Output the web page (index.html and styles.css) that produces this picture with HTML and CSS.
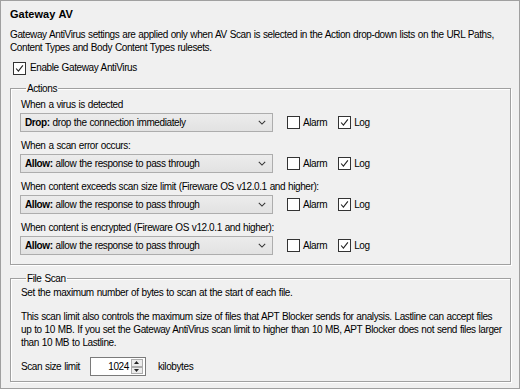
FILE: index.html
```html
<!DOCTYPE html>
<html lang="en">
<head>
  <meta charset="UTF-8"/>
  <title>Gateway AV</title>
  <link rel="stylesheet" href="styles.css">
</head>
<body>
  <div class="panel">
    <h2 class="panel-title">Gateway AV</h2>
    <p class="intro">Gateway AntiVirus settings are applied only when AV Scan is selected in the Action drop-down lists on the URL Paths, Content Types and Body Content Types rulesets.</p>

    <label class="check-row enable-row">
      <span class="box checked"><svg viewBox="0 0 13 13"><path d="M2.5 6.5l2.7 3L10.5 2.8"/></svg></span>
      Enable Gateway AntiVirus
    </label>

    <fieldset class="group actions">
      <legend>Actions</legend>

      <div class="action">
        <div class="action-label">When a virus is detected</div>
        <div class="action-row">
          <div class="select"><span><b>Drop:</b> drop the connection immediately</span><svg viewBox="0 0 10 6"><path d="M1 1l4 4 4-4"/></svg></div>
          <label class="check-row"><span class="box"></span>Alarm</label>
          <label class="check-row"><span class="box checked"><svg viewBox="0 0 13 13"><path d="M2.5 6.5l2.7 3L10.5 2.8"/></svg></span>Log</label>
        </div>
      </div>

      <div class="action">
        <div class="action-label">When a scan error occurs:</div>
        <div class="action-row">
          <div class="select"><span><b>Allow:</b> allow the response to pass through</span><svg viewBox="0 0 10 6"><path d="M1 1l4 4 4-4"/></svg></div>
          <label class="check-row"><span class="box"></span>Alarm</label>
          <label class="check-row"><span class="box checked"><svg viewBox="0 0 13 13"><path d="M2.5 6.5l2.7 3L10.5 2.8"/></svg></span>Log</label>
        </div>
      </div>

      <div class="action">
        <div class="action-label">When content exceeds scan size limit (Fireware OS v12.0.1 and higher):</div>
        <div class="action-row">
          <div class="select"><span><b>Allow:</b> allow the response to pass through</span><svg viewBox="0 0 10 6"><path d="M1 1l4 4 4-4"/></svg></div>
          <label class="check-row"><span class="box"></span>Alarm</label>
          <label class="check-row"><span class="box checked"><svg viewBox="0 0 13 13"><path d="M2.5 6.5l2.7 3L10.5 2.8"/></svg></span>Log</label>
        </div>
      </div>

      <div class="action">
        <div class="action-label">When content is encrypted (Fireware OS v12.0.1 and higher):</div>
        <div class="action-row">
          <div class="select"><span><b>Allow:</b> allow the response to pass through</span><svg viewBox="0 0 10 6"><path d="M1 1l4 4 4-4"/></svg></div>
          <label class="check-row"><span class="box"></span>Alarm</label>
          <label class="check-row"><span class="box checked"><svg viewBox="0 0 13 13"><path d="M2.5 6.5l2.7 3L10.5 2.8"/></svg></span>Log</label>
        </div>
      </div>
    </fieldset>

    <fieldset class="group file-scan">
      <legend>File Scan</legend>
      <p class="note first">Set the maximum number of bytes to scan at the start of each file.</p>
      <p class="note">This scan limit also controls the maximum size of files that APT Blocker sends for analysis. Lastline can accept files up to 10 MB. If you set the Gateway AntiVirus scan limit to higher than 10 MB, APT Blocker does not send files larger than 10 MB to Lastline.</p>
      <div class="limit-row">
        <span>Scan size limit</span>
        <div class="spin">
          <span class="spin-value">1024</span>
          <div class="spin-buttons">
            <span class="spin-btn"><svg viewBox="0 0 7 4"><path d="M0 4L3.5 0 7 4z"/></svg></span>
            <span class="spin-btn"><svg viewBox="0 0 7 4"><path d="M0 0h7L3.5 4z"/></svg></span>
          </div>
        </div>
        <span>kilobytes</span>
      </div>
    </fieldset>
  </div>
</body>
</html>
```

FILE: styles.css
```css
* {
  margin: 0;
  padding: 0;
  box-sizing: border-box;
}

body {
  font-family: "Liberation Sans", Arial, sans-serif;
  font-size: 10px;
  letter-spacing: -0.4px;
  word-spacing: 0.5px;
  color: #000;
  background: #f0f0f0;
}

.panel {
  width: 520px;
  height: 389px;
  border: 1px solid #a0a0a0;
  background: #f0f0f0;
  padding: 6px 8px 0 9px;
}

.panel-title {
  font-size: 11px;
  font-weight: bold;
  letter-spacing: 0;
  line-height: 14px;
  margin-bottom: 7px;
}

.intro {
  line-height: 13px;
  margin-bottom: 7px;
}

.check-row {
  display: flex;
  align-items: center;
  gap: 3px;
  line-height: 14px;
}

.enable-row {
  margin-left: 3px;
  gap: 4px;
}

.box {
  width: 13px;
  height: 13px;
  border: 1px solid #333;
  background: #fff;
  display: inline-flex;
  align-items: center;
  justify-content: center;
  flex-shrink: 0;
}

.box svg {
  width: 11px;
  height: 11px;
  fill: none;
  stroke: #222;
  stroke-width: 1.3;
}

/* Group boxes */
.group {
  border: 1px solid #a0a0a0;
  box-shadow: 1px 1px 0 #fff, inset 1px 1px 0 #fff;
  padding: 1px 8px 9px 9px;
  margin-top: 7px;
  width: 501px;
}

.group legend {
  margin-left: 6px;
  padding: 0 1px;
  line-height: 13px;
}

.action {
  margin-bottom: 7px;
}

.action:last-child {
  margin-bottom: 0;
}

.action-label {
  line-height: 13px;
  margin: 2px 0 2px 1px;
}

.action-row {
  display: flex;
  align-items: center;
}

.select {
  width: 253px;
  height: 19px;
  border: 1px solid #adadad;
  background: linear-gradient(#ececec, #e2e2e2);
  display: flex;
  align-items: center;
  justify-content: space-between;
  padding: 0 6px 0 4px;
  margin-right: 14px;
}

.select svg {
  width: 8px;
  height: 5px;
  fill: none;
  stroke: #333;
  stroke-width: 1.3;
}

.action-row .check-row + .check-row {
  margin-left: 11px;
}

/* File scan */
.file-scan {
  margin-top: 7px;
  padding-top: 0;
  padding-bottom: 5px;
}

.note {
  line-height: 13px;
  margin-left: 1px;
}

.note.first {
  margin: 1px 0 11px 1px;
}

.limit-row {
  display: flex;
  align-items: center;
  margin-top: 8px;
  margin-left: 1px;
}

.spin {
  width: 56px;
  height: 19px;
  border: 1px solid #7a7a7a;
  background: #fff;
  margin: 0 12px 0 10px;
  display: flex;
  align-items: center;
  justify-content: flex-end;
  padding-right: 2px;
}

.spin-value {
  margin-right: 2px;
}

.spin-buttons {
  display: flex;
  flex-direction: column;
  height: 15px;
}

.spin-btn {
  width: 12px;
  height: 7.5px;
  border: 1px solid #adadad;
  background: #ececec;
  display: flex;
  align-items: center;
  justify-content: center;
}

.spin-btn svg {
  width: 5px;
  height: 3px;
  fill: #222;
}
```
